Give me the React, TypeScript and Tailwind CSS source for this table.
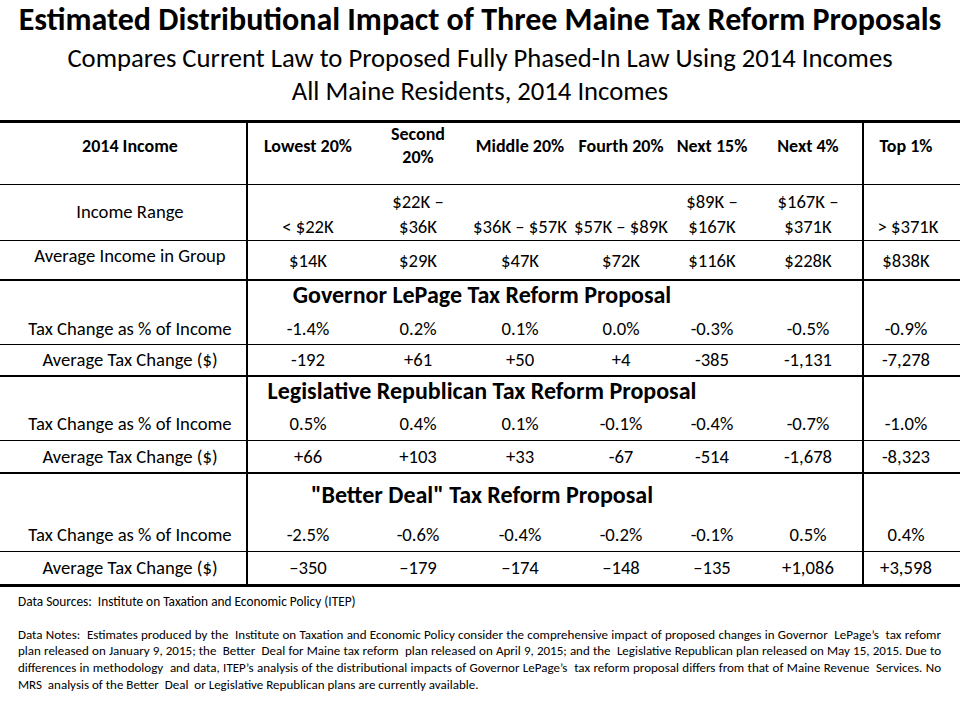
import React from "react";

const cols = "grid grid-cols-[248px_120px_100px_104px_98px_84px_110px_96px]";

type Row = { label: string; vals: string[] };

function DataRow({ row, h, border }: { row: Row; h: string; border: string }) {
  return (
    <div className={`${cols} ${h} ${border} border-black`}>
      <div className="border-r-2 border-black flex items-center justify-center pl-[14px]">{row.label}</div>
      {row.vals.map((v, i) => (
        <div
          key={i}
          className={`flex items-center justify-center ${i === 5 ? "border-r-2 border-black" : ""} ${i === 6 ? "pr-[12px]" : ""}`}
        >
          {v}
        </div>
      ))}
    </div>
  );
}

function SectionHeader({ title, h, pb }: { title: string; h: string; pb: string }) {
  return (
    <div className={`${cols} ${h}`}>
      <div className="border-r-2 border-black" />
      <div className={`col-span-6 border-r-2 border-black flex items-center justify-center pr-[146px] ${pb} text-[24px] leading-[28px] font-bold whitespace-nowrap`}>
        {title}
      </div>
      <div />
    </div>
  );
}

export default function App() {
  const font = { fontFamily: "Carlito, Calibri, 'Open Sans', sans-serif" };
  return (
    <div className="w-[960px] h-[720px] bg-white text-black overflow-hidden" style={font}>
      <div className="h-[120px] flex flex-col items-center">
        <h1 className="text-[32px] font-bold leading-[40px] whitespace-nowrap">
          Estimated Distributional Impact of Three Maine Tax Reform Proposals
        </h1>
        <p className="text-[26.67px] leading-[33px] mt-[2px] whitespace-nowrap">
          Compares Current Law to Proposed Fully Phased-In Law Using 2014 Incomes
        </p>
        <p className="text-[26.67px] leading-[33px] whitespace-nowrap">All Maine Residents, 2014 Incomes</p>
      </div>

      <div className="border-t-[3px] border-b-[3px] border-black text-[18.67px]">
        {/* Header */}
        <div className={`${cols} h-[62px] border-b border-black font-bold text-[18px] leading-[23px]`}>
          <div className="border-r-2 border-black flex items-center justify-center pl-[14px] pb-[18px]">2014 Income</div>
          <div className="flex items-center justify-center pb-[18px]">Lowest 20%</div>
          <div className="flex items-center justify-center text-center pb-[18px]">
            Second
            <br />
            20%
          </div>
          <div className="flex items-center justify-center whitespace-nowrap pb-[18px]">Middle 20%</div>
          <div className="flex items-center justify-center whitespace-nowrap pb-[18px]">Fourth 20%</div>
          <div className="flex items-center justify-center whitespace-nowrap pb-[18px]">Next 15%</div>
          <div className="border-r-2 border-black flex items-center justify-center pb-[18px]">Next 4%</div>
          <div className="flex items-center justify-center pr-[12px] pb-[18px]">Top 1%</div>
        </div>

        {/* Income Range */}
        <div className={`${cols} h-[56px] border-b border-black leading-[25px]`}>
          <div className="border-r-2 border-black flex items-center justify-center pl-[14px] pb-[2px]">Income Range</div>
          {["< $22K", "$22K –\n$36K", "$36K – $57K", "$57K – $89K", "$89K –\n$167K", "$167K –\n$371K", "> $371K"].map(
            (v, i) => (
              <div
                key={i}
                className={`flex items-end justify-center text-center whitespace-pre pb-[1px] ${i === 5 ? "border-r-2 border-black" : ""} ${i === 6 ? "pr-[8px]" : ""}`}
              >
                {v}
              </div>
            )
          )}
        </div>

        {/* Average Income */}
        <div className={`${cols} h-[40px] border-b-2 border-black leading-[24px]`}>
          <div className="border-r-2 border-black flex items-start justify-center pl-[14px] pt-[3px]">
            Average Income in Group
          </div>
          {["$14K", "$29K", "$47K", "$72K", "$116K", "$228K", "$838K"].map((v, i) => (
            <div
              key={i}
              className={`flex items-end justify-center pb-[6px] ${i === 5 ? "border-r-2 border-black" : ""} ${i === 6 ? "pr-[12px]" : ""}`}
            >
              {v}
            </div>
          ))}
        </div>

        <SectionHeader title="Governor LePage Tax Reform Proposal" h="h-[32px]" pb="pb-[12px]" />
        <DataRow
          row={{ label: "Tax Change as % of Income", vals: ["-1.4%", "0.2%", "0.1%", "0.0%", "-0.3%", "-0.5%", "-0.9%"] }}
          h="h-[32px]"
          border="border-b"
        />
        <DataRow
          row={{ label: "Average Tax Change ($)", vals: ["-192", "+61", "+50", "+4", "-385", "-1,131", "-7,278"] }}
          h="h-[32px]"
          border="border-b-2"
        />

        <SectionHeader title="Legislative Republican Tax Reform Proposal" h="h-[31px]" pb="pb-[10px]" />
        <DataRow
          row={{ label: "Tax Change as % of Income", vals: ["0.5%", "0.4%", "0.1%", "-0.1%", "-0.4%", "-0.7%", "-1.0%"] }}
          h="h-[33px]"
          border="border-b"
        />
        <DataRow
          row={{ label: "Average Tax Change ($)", vals: ["+66", "+103", "+33", "-67", "-514", "-1,678", "-8,323"] }}
          h="h-[33px]"
          border="border-b-2"
        />

        <SectionHeader title={'"Better Deal" Tax Reform Proposal'} h="h-[44px]" pb="pb-[2px]" />
        <DataRow
          row={{ label: "Tax Change as % of Income", vals: ["-2.5%", "-0.6%", "-0.4%", "-0.2%", "-0.1%", "0.5%", "0.4%"] }}
          h="h-[34px]"
          border="border-b"
        />
        <DataRow
          row={{ label: "Average Tax Change ($)", vals: ["–350", "–179", "–174", "–148", "–135", "+1,086", "+3,598"] }}
          h="h-[32px]"
          border=""
        />
      </div>

      <div className="pl-[18px] pr-[19px] text-[13px] leading-[16.7px]">
        <p className="mt-[7px] text-[13.33px]">Data Sources:&nbsp; Institute on Taxation and Economic Policy (ITEP)</p>
        <div className="mt-[16px]">
          <p className="[text-align-last:justify] text-justify whitespace-nowrap">
            Data Notes:&nbsp; Estimates produced by the&nbsp; Institute on Taxation and Economic Policy consider the comprehensive impact of proposed changes in Governor&nbsp; LePage’s&nbsp; tax refomr
          </p>
          <p className="[text-align-last:justify] text-justify whitespace-nowrap">
            plan released on January 9, 2015; the&nbsp; Better&nbsp; Deal for Maine tax reform&nbsp; plan released on April 9, 2015; and the&nbsp; Legislative Republican plan released on May 15, 2015. Due to
          </p>
          <p className="[text-align-last:justify] text-justify whitespace-nowrap">
            differences in methodology&nbsp; and data, ITEP’s analysis of the distributional impacts of Governor LePage’s&nbsp; tax reform proposal differs from that of Maine Revenue&nbsp; Services. No
          </p>
          <p className="whitespace-nowrap">
            MRS&nbsp; analysis of the Better&nbsp; Deal&nbsp; or Legislative Republican plans are currently available.
          </p>
        </div>
      </div>
    </div>
  );
}
